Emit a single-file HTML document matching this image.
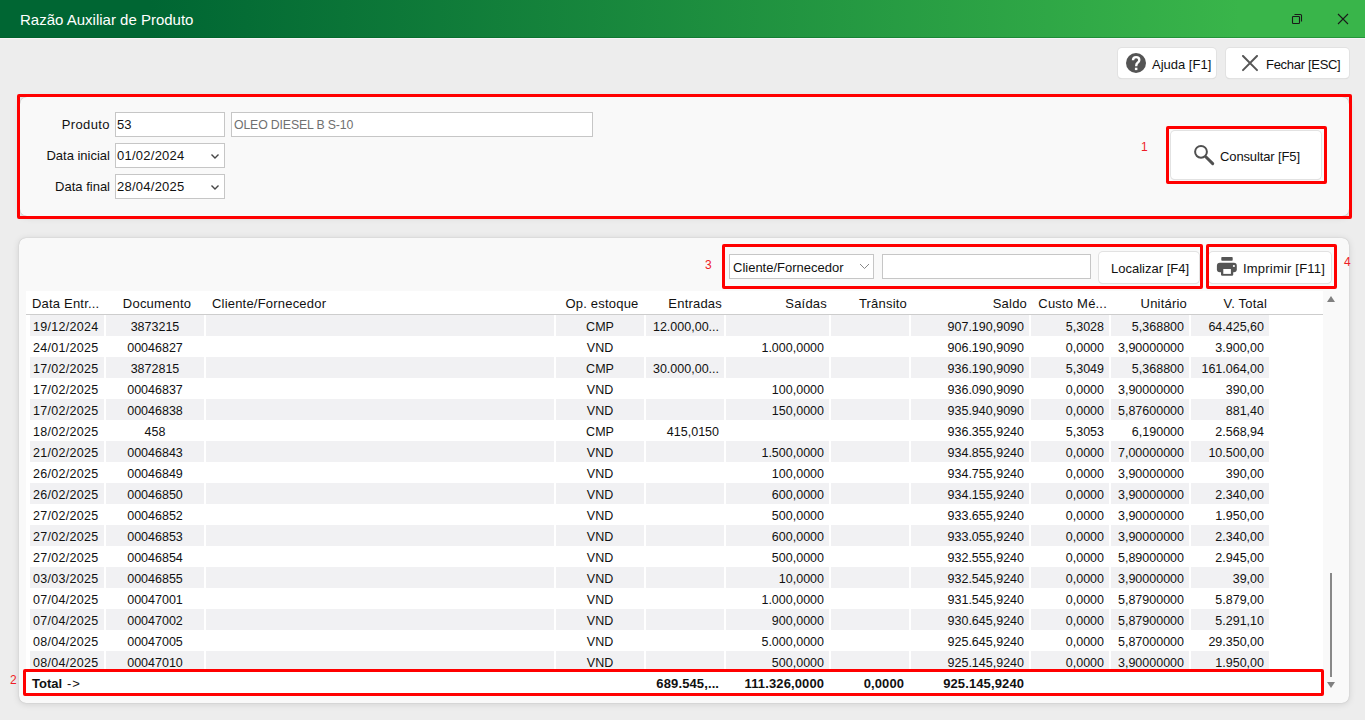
<!DOCTYPE html>
<html><head><meta charset="utf-8">
<style>
*{box-sizing:border-box;margin:0;padding:0}
html,body{width:1365px;height:720px;overflow:hidden;background:#ededed;font-family:"Liberation Sans",sans-serif;font-size:13px;color:#111}
.a{position:absolute}
#title{left:0;top:0;width:1365px;height:38px;background:linear-gradient(to right,#006633 0px,#006633 150px,#39b54a 1240px,#39b54a 1365px);border-bottom:1px solid rgba(0,90,30,0.35)}
#tline{left:0;top:38px;width:1365px;height:1px;background:#f8f4f8}
#ttext{left:20px;top:11px;font-size:15px;color:#fff;line-height:18px;white-space:nowrap}
.btn{position:absolute;background:#fff;border-radius:4px;box-shadow:0 0 0 1px #e2e2e2,0 1px 1px rgba(0,0,0,0.12);white-space:nowrap}
.panel{position:absolute;background:#f9f9f9;border-radius:7px;box-shadow:0 0 1px rgba(0,0,0,0.25),0 1px 7px rgba(0,0,0,0.13)}
.red{position:absolute;border:3px solid #ff0000;border-radius:2px}
.lbl{position:absolute;white-space:nowrap;line-height:16px}
.inp{position:absolute;background:#fff;border:1px solid #c6c6c6}
.num{position:absolute;color:#ee1d26;font-size:12px;line-height:12px}
.tx{position:absolute;white-space:nowrap;line-height:16px}
.th{position:absolute;top:296px;white-space:nowrap;line-height:16px;letter-spacing:0.2px}
.cb{position:absolute;height:21px;background:#f1f1f3}
.td{position:absolute;white-space:nowrap;line-height:21px;height:21px;font-size:12.5px}
.dt{letter-spacing:0.3px}
.b{font-weight:bold;font-size:13px;letter-spacing:0.12px}
</style></head><body>
<div id="title" class="a"></div>
<div id="tline" class="a"></div>
<div id="ttext" class="a">Razão Auxiliar de Produto</div>
<!-- restore icon -->
<svg class="a" style="left:1290px;top:12px" width="14" height="14" viewBox="0 0 14 14"><rect x="2.5" y="4.5" width="7" height="7" rx="0.8" fill="none" stroke="#1a1a1a" stroke-width="1.1"/><path d="M4.5 2.5 H10.5 Q11.5 2.5 11.5 3.5 V9.5" fill="none" stroke="#1a1a1a" stroke-width="1.1"/></svg>
<!-- close icon -->
<svg class="a" style="left:1336px;top:12px" width="14" height="14" viewBox="0 0 14 14"><path d="M2 2 L12 12 M12 2 L2 12" stroke="#1a1a1a" stroke-width="1.1"/></svg>

<!-- top buttons -->
<div class="btn" style="left:1118px;top:48px;width:98px;height:30px"></div>
<svg class="a" style="left:1126px;top:53px" width="20" height="20" viewBox="0 0 20 20"><circle cx="10" cy="10" r="10" fill="#545454"/><path d="M7 7.3 Q7 4.1 10.1 4.1 Q13.3 4.1 13.3 7 Q13.3 8.7 11.6 9.8 Q10.2 10.8 10.2 13.2" fill="none" stroke="#fff" stroke-width="2.4"/><rect x="8.9" y="14.7" width="2.5" height="2.4" fill="#fff"/></svg>
<div class="tx" style="left:1152px;top:57px">Ajuda [F1]</div>
<div class="btn" style="left:1226px;top:48px;width:123px;height:30px"></div>
<svg class="a" style="left:1241px;top:55px" width="18" height="17" viewBox="0 0 18 17"><path d="M2 1 L16 15.1 M16 1 L2 15.1" stroke="#565656" stroke-width="2" stroke-linecap="round"/></svg>
<div class="tx" style="left:1266px;top:57px;letter-spacing:-0.3px">Fechar [ESC]</div>

<!-- panel 1 -->
<div class="panel" style="left:20px;top:97px;width:1329px;height:119px"></div>
<div class="red" style="left:17px;top:94px;width:1335px;height:125px"></div>

<div class="lbl" style="left:0;width:110px;text-align:right;top:117px;letter-spacing:0.4px">Produto</div>
<div class="lbl" style="left:0;width:110px;text-align:right;top:148px">Data inicial</div>
<div class="lbl" style="left:0;width:110px;text-align:right;top:179px">Data final</div>
<div class="inp" style="left:115px;top:112px;width:110px;height:25px"></div>
<div class="tx" style="left:117px;top:117px">53</div>
<div class="inp" style="left:231px;top:112px;width:362px;height:25px"></div>
<div class="tx" style="left:234px;top:117px;color:#707070;font-size:12.3px;letter-spacing:-0.15px">OLEO DIESEL B S-10</div>
<div class="inp" style="left:115px;top:143px;width:110px;height:25px"></div>
<div class="tx" style="left:117px;top:148px;letter-spacing:0.25px">01/02/2024</div>
<svg class="a" style="left:210px;top:152.6px" width="10" height="7" viewBox="0 0 10 7"><path d="M1.5 1.5 L5 5 L8.5 1.5" fill="none" stroke="#464646" stroke-width="1.4"/></svg>
<div class="inp" style="left:115px;top:174px;width:110px;height:25px"></div>
<div class="tx" style="left:117px;top:179px;letter-spacing:0.25px">28/04/2025</div>
<svg class="a" style="left:210px;top:183.6px" width="10" height="7" viewBox="0 0 10 7"><path d="M1.5 1.5 L5 5 L8.5 1.5" fill="none" stroke="#464646" stroke-width="1.4"/></svg>

<div class="num" style="left:1141px;top:141px">1</div>
<div class="btn" style="left:1171px;top:131px;width:150px;height:48px"></div>
<div class="red" style="left:1166px;top:126px;width:161px;height:58px"></div>
<svg class="a" style="left:1192px;top:143px" width="24" height="24" viewBox="0 0 24 24"><circle cx="9" cy="8.8" r="5.9" fill="none" stroke="#505050" stroke-width="2"/><path d="M14 14 L20.7 20.6" stroke="#505050" stroke-width="3" stroke-linecap="round"/></svg>
<div class="tx" style="left:1220px;top:149px;letter-spacing:-0.12px">Consultar [F5]</div>

<!-- panel 2 -->
<div class="panel" style="left:19px;top:238px;width:1330px;height:465px"></div>
<div class="num" style="left:705px;top:259px">3</div>
<div class="inp" style="left:729px;top:254px;width:145px;height:25px"></div>
<div class="tx" style="left:733px;top:260px">Cliente/Fornecedor</div>
<svg class="a" style="left:859px;top:263px" width="11" height="7" viewBox="0 0 11 7"><path d="M1 1 L5.5 5.5 L10 1" fill="none" stroke="#888" stroke-width="1"/></svg>
<div class="inp" style="left:882px;top:254px;width:209px;height:25px"></div>
<div class="btn" style="left:1099px;top:252px;width:100px;height:31px"></div>
<div class="tx" style="left:1111px;top:261px">Localizar [F4]</div>
<div class="red" style="left:722px;top:244px;width:481px;height:45px"></div>
<div class="btn" style="left:1209px;top:252px;width:122px;height:31px"></div>
<div class="red" style="left:1206px;top:244px;width:131px;height:45px"></div>
<div class="num" style="left:1344px;top:256px">4</div>

<!--TABLE-->
<div class="a" style="left:26px;top:291px;width:1297px;height:403px;background:#fff"></div>
<div class="a" style="left:26px;top:314px;width:1297px;height:1px;background:#cdcdcd"></div>
<div class="th" style="left:32px">Data Entr...</div>
<div class="th" style="left:108px;width:98px;text-align:center">Documento</div>
<div class="th" style="left:212px">Cliente/Fornecedor</div>
<div class="th" style="left:558px;width:88px;text-align:center">Op. estoque</div>
<div class="th" style="left:646px;width:76px;text-align:right">Entradas</div>
<div class="th" style="left:726px;width:101px;text-align:right">Saídas</div>
<div class="th" style="left:831px;width:76px;text-align:right">Trânsito</div>
<div class="th" style="left:911px;width:116px;text-align:right">Saldo</div>
<div class="th" style="left:1031px;width:76px;text-align:right">Custo Mé...</div>
<div class="th" style="left:1111px;width:76px;text-align:right">Unitário</div>
<div class="th" style="left:1191px;width:76px;text-align:right">V. Total</div>
<div class="cb" style="left:30px;top:315px;width:74px"></div>
<div class="cb" style="left:106px;top:315px;width:98px"></div>
<div class="cb" style="left:206px;top:315px;width:348px"></div>
<div class="cb" style="left:556px;top:315px;width:88px"></div>
<div class="cb" style="left:646px;top:315px;width:78px"></div>
<div class="cb" style="left:726px;top:315px;width:103px"></div>
<div class="cb" style="left:831px;top:315px;width:78px"></div>
<div class="cb" style="left:911px;top:315px;width:118px"></div>
<div class="cb" style="left:1031px;top:315px;width:78px"></div>
<div class="cb" style="left:1111px;top:315px;width:78px"></div>
<div class="cb" style="left:1191px;top:315px;width:78px"></div>
<div class="td dt" style="top:317px;left:33px">19/12/2024</div>
<div class="td" style="top:317px;left:106px;width:98px;text-align:center">3873215</div>
<div class="td" style="top:317px;left:556px;width:88px;text-align:center">CMP</div>
<div class="td" style="top:317px;left:646px;width:73px;text-align:right">12.000,00...</div>
<div class="td" style="top:317px;left:911px;width:113px;text-align:right">907.190,9090</div>
<div class="td" style="top:317px;left:1031px;width:73px;text-align:right">5,3028</div>
<div class="td" style="top:317px;left:1111px;width:73px;text-align:right">5,368800</div>
<div class="td" style="top:317px;left:1191px;width:73px;text-align:right">64.425,60</div>
<div class="td dt" style="top:338px;left:33px">24/01/2025</div>
<div class="td" style="top:338px;left:106px;width:98px;text-align:center">00046827</div>
<div class="td" style="top:338px;left:556px;width:88px;text-align:center">VND</div>
<div class="td" style="top:338px;left:726px;width:98px;text-align:right">1.000,0000</div>
<div class="td" style="top:338px;left:911px;width:113px;text-align:right">906.190,9090</div>
<div class="td" style="top:338px;left:1031px;width:73px;text-align:right">0,0000</div>
<div class="td" style="top:338px;left:1111px;width:73px;text-align:right">3,90000000</div>
<div class="td" style="top:338px;left:1191px;width:73px;text-align:right">3.900,00</div>
<div class="cb" style="left:30px;top:357px;width:74px"></div>
<div class="cb" style="left:106px;top:357px;width:98px"></div>
<div class="cb" style="left:206px;top:357px;width:348px"></div>
<div class="cb" style="left:556px;top:357px;width:88px"></div>
<div class="cb" style="left:646px;top:357px;width:78px"></div>
<div class="cb" style="left:726px;top:357px;width:103px"></div>
<div class="cb" style="left:831px;top:357px;width:78px"></div>
<div class="cb" style="left:911px;top:357px;width:118px"></div>
<div class="cb" style="left:1031px;top:357px;width:78px"></div>
<div class="cb" style="left:1111px;top:357px;width:78px"></div>
<div class="cb" style="left:1191px;top:357px;width:78px"></div>
<div class="td dt" style="top:359px;left:33px">17/02/2025</div>
<div class="td" style="top:359px;left:106px;width:98px;text-align:center">3872815</div>
<div class="td" style="top:359px;left:556px;width:88px;text-align:center">CMP</div>
<div class="td" style="top:359px;left:646px;width:73px;text-align:right">30.000,00...</div>
<div class="td" style="top:359px;left:911px;width:113px;text-align:right">936.190,9090</div>
<div class="td" style="top:359px;left:1031px;width:73px;text-align:right">5,3049</div>
<div class="td" style="top:359px;left:1111px;width:73px;text-align:right">5,368800</div>
<div class="td" style="top:359px;left:1191px;width:73px;text-align:right">161.064,00</div>
<div class="td dt" style="top:380px;left:33px">17/02/2025</div>
<div class="td" style="top:380px;left:106px;width:98px;text-align:center">00046837</div>
<div class="td" style="top:380px;left:556px;width:88px;text-align:center">VND</div>
<div class="td" style="top:380px;left:726px;width:98px;text-align:right">100,0000</div>
<div class="td" style="top:380px;left:911px;width:113px;text-align:right">936.090,9090</div>
<div class="td" style="top:380px;left:1031px;width:73px;text-align:right">0,0000</div>
<div class="td" style="top:380px;left:1111px;width:73px;text-align:right">3,90000000</div>
<div class="td" style="top:380px;left:1191px;width:73px;text-align:right">390,00</div>
<div class="cb" style="left:30px;top:399px;width:74px"></div>
<div class="cb" style="left:106px;top:399px;width:98px"></div>
<div class="cb" style="left:206px;top:399px;width:348px"></div>
<div class="cb" style="left:556px;top:399px;width:88px"></div>
<div class="cb" style="left:646px;top:399px;width:78px"></div>
<div class="cb" style="left:726px;top:399px;width:103px"></div>
<div class="cb" style="left:831px;top:399px;width:78px"></div>
<div class="cb" style="left:911px;top:399px;width:118px"></div>
<div class="cb" style="left:1031px;top:399px;width:78px"></div>
<div class="cb" style="left:1111px;top:399px;width:78px"></div>
<div class="cb" style="left:1191px;top:399px;width:78px"></div>
<div class="td dt" style="top:401px;left:33px">17/02/2025</div>
<div class="td" style="top:401px;left:106px;width:98px;text-align:center">00046838</div>
<div class="td" style="top:401px;left:556px;width:88px;text-align:center">VND</div>
<div class="td" style="top:401px;left:726px;width:98px;text-align:right">150,0000</div>
<div class="td" style="top:401px;left:911px;width:113px;text-align:right">935.940,9090</div>
<div class="td" style="top:401px;left:1031px;width:73px;text-align:right">0,0000</div>
<div class="td" style="top:401px;left:1111px;width:73px;text-align:right">5,87600000</div>
<div class="td" style="top:401px;left:1191px;width:73px;text-align:right">881,40</div>
<div class="td dt" style="top:422px;left:33px">18/02/2025</div>
<div class="td" style="top:422px;left:106px;width:98px;text-align:center">458</div>
<div class="td" style="top:422px;left:556px;width:88px;text-align:center">CMP</div>
<div class="td" style="top:422px;left:646px;width:73px;text-align:right">415,0150</div>
<div class="td" style="top:422px;left:911px;width:113px;text-align:right">936.355,9240</div>
<div class="td" style="top:422px;left:1031px;width:73px;text-align:right">5,3053</div>
<div class="td" style="top:422px;left:1111px;width:73px;text-align:right">6,190000</div>
<div class="td" style="top:422px;left:1191px;width:73px;text-align:right">2.568,94</div>
<div class="cb" style="left:30px;top:441px;width:74px"></div>
<div class="cb" style="left:106px;top:441px;width:98px"></div>
<div class="cb" style="left:206px;top:441px;width:348px"></div>
<div class="cb" style="left:556px;top:441px;width:88px"></div>
<div class="cb" style="left:646px;top:441px;width:78px"></div>
<div class="cb" style="left:726px;top:441px;width:103px"></div>
<div class="cb" style="left:831px;top:441px;width:78px"></div>
<div class="cb" style="left:911px;top:441px;width:118px"></div>
<div class="cb" style="left:1031px;top:441px;width:78px"></div>
<div class="cb" style="left:1111px;top:441px;width:78px"></div>
<div class="cb" style="left:1191px;top:441px;width:78px"></div>
<div class="td dt" style="top:443px;left:33px">21/02/2025</div>
<div class="td" style="top:443px;left:106px;width:98px;text-align:center">00046843</div>
<div class="td" style="top:443px;left:556px;width:88px;text-align:center">VND</div>
<div class="td" style="top:443px;left:726px;width:98px;text-align:right">1.500,0000</div>
<div class="td" style="top:443px;left:911px;width:113px;text-align:right">934.855,9240</div>
<div class="td" style="top:443px;left:1031px;width:73px;text-align:right">0,0000</div>
<div class="td" style="top:443px;left:1111px;width:73px;text-align:right">7,00000000</div>
<div class="td" style="top:443px;left:1191px;width:73px;text-align:right">10.500,00</div>
<div class="td dt" style="top:464px;left:33px">26/02/2025</div>
<div class="td" style="top:464px;left:106px;width:98px;text-align:center">00046849</div>
<div class="td" style="top:464px;left:556px;width:88px;text-align:center">VND</div>
<div class="td" style="top:464px;left:726px;width:98px;text-align:right">100,0000</div>
<div class="td" style="top:464px;left:911px;width:113px;text-align:right">934.755,9240</div>
<div class="td" style="top:464px;left:1031px;width:73px;text-align:right">0,0000</div>
<div class="td" style="top:464px;left:1111px;width:73px;text-align:right">3,90000000</div>
<div class="td" style="top:464px;left:1191px;width:73px;text-align:right">390,00</div>
<div class="cb" style="left:30px;top:483px;width:74px"></div>
<div class="cb" style="left:106px;top:483px;width:98px"></div>
<div class="cb" style="left:206px;top:483px;width:348px"></div>
<div class="cb" style="left:556px;top:483px;width:88px"></div>
<div class="cb" style="left:646px;top:483px;width:78px"></div>
<div class="cb" style="left:726px;top:483px;width:103px"></div>
<div class="cb" style="left:831px;top:483px;width:78px"></div>
<div class="cb" style="left:911px;top:483px;width:118px"></div>
<div class="cb" style="left:1031px;top:483px;width:78px"></div>
<div class="cb" style="left:1111px;top:483px;width:78px"></div>
<div class="cb" style="left:1191px;top:483px;width:78px"></div>
<div class="td dt" style="top:485px;left:33px">26/02/2025</div>
<div class="td" style="top:485px;left:106px;width:98px;text-align:center">00046850</div>
<div class="td" style="top:485px;left:556px;width:88px;text-align:center">VND</div>
<div class="td" style="top:485px;left:726px;width:98px;text-align:right">600,0000</div>
<div class="td" style="top:485px;left:911px;width:113px;text-align:right">934.155,9240</div>
<div class="td" style="top:485px;left:1031px;width:73px;text-align:right">0,0000</div>
<div class="td" style="top:485px;left:1111px;width:73px;text-align:right">3,90000000</div>
<div class="td" style="top:485px;left:1191px;width:73px;text-align:right">2.340,00</div>
<div class="td dt" style="top:506px;left:33px">27/02/2025</div>
<div class="td" style="top:506px;left:106px;width:98px;text-align:center">00046852</div>
<div class="td" style="top:506px;left:556px;width:88px;text-align:center">VND</div>
<div class="td" style="top:506px;left:726px;width:98px;text-align:right">500,0000</div>
<div class="td" style="top:506px;left:911px;width:113px;text-align:right">933.655,9240</div>
<div class="td" style="top:506px;left:1031px;width:73px;text-align:right">0,0000</div>
<div class="td" style="top:506px;left:1111px;width:73px;text-align:right">3,90000000</div>
<div class="td" style="top:506px;left:1191px;width:73px;text-align:right">1.950,00</div>
<div class="cb" style="left:30px;top:525px;width:74px"></div>
<div class="cb" style="left:106px;top:525px;width:98px"></div>
<div class="cb" style="left:206px;top:525px;width:348px"></div>
<div class="cb" style="left:556px;top:525px;width:88px"></div>
<div class="cb" style="left:646px;top:525px;width:78px"></div>
<div class="cb" style="left:726px;top:525px;width:103px"></div>
<div class="cb" style="left:831px;top:525px;width:78px"></div>
<div class="cb" style="left:911px;top:525px;width:118px"></div>
<div class="cb" style="left:1031px;top:525px;width:78px"></div>
<div class="cb" style="left:1111px;top:525px;width:78px"></div>
<div class="cb" style="left:1191px;top:525px;width:78px"></div>
<div class="td dt" style="top:527px;left:33px">27/02/2025</div>
<div class="td" style="top:527px;left:106px;width:98px;text-align:center">00046853</div>
<div class="td" style="top:527px;left:556px;width:88px;text-align:center">VND</div>
<div class="td" style="top:527px;left:726px;width:98px;text-align:right">600,0000</div>
<div class="td" style="top:527px;left:911px;width:113px;text-align:right">933.055,9240</div>
<div class="td" style="top:527px;left:1031px;width:73px;text-align:right">0,0000</div>
<div class="td" style="top:527px;left:1111px;width:73px;text-align:right">3,90000000</div>
<div class="td" style="top:527px;left:1191px;width:73px;text-align:right">2.340,00</div>
<div class="td dt" style="top:548px;left:33px">27/02/2025</div>
<div class="td" style="top:548px;left:106px;width:98px;text-align:center">00046854</div>
<div class="td" style="top:548px;left:556px;width:88px;text-align:center">VND</div>
<div class="td" style="top:548px;left:726px;width:98px;text-align:right">500,0000</div>
<div class="td" style="top:548px;left:911px;width:113px;text-align:right">932.555,9240</div>
<div class="td" style="top:548px;left:1031px;width:73px;text-align:right">0,0000</div>
<div class="td" style="top:548px;left:1111px;width:73px;text-align:right">5,89000000</div>
<div class="td" style="top:548px;left:1191px;width:73px;text-align:right">2.945,00</div>
<div class="cb" style="left:30px;top:567px;width:74px"></div>
<div class="cb" style="left:106px;top:567px;width:98px"></div>
<div class="cb" style="left:206px;top:567px;width:348px"></div>
<div class="cb" style="left:556px;top:567px;width:88px"></div>
<div class="cb" style="left:646px;top:567px;width:78px"></div>
<div class="cb" style="left:726px;top:567px;width:103px"></div>
<div class="cb" style="left:831px;top:567px;width:78px"></div>
<div class="cb" style="left:911px;top:567px;width:118px"></div>
<div class="cb" style="left:1031px;top:567px;width:78px"></div>
<div class="cb" style="left:1111px;top:567px;width:78px"></div>
<div class="cb" style="left:1191px;top:567px;width:78px"></div>
<div class="td dt" style="top:569px;left:33px">03/03/2025</div>
<div class="td" style="top:569px;left:106px;width:98px;text-align:center">00046855</div>
<div class="td" style="top:569px;left:556px;width:88px;text-align:center">VND</div>
<div class="td" style="top:569px;left:726px;width:98px;text-align:right">10,0000</div>
<div class="td" style="top:569px;left:911px;width:113px;text-align:right">932.545,9240</div>
<div class="td" style="top:569px;left:1031px;width:73px;text-align:right">0,0000</div>
<div class="td" style="top:569px;left:1111px;width:73px;text-align:right">3,90000000</div>
<div class="td" style="top:569px;left:1191px;width:73px;text-align:right">39,00</div>
<div class="td dt" style="top:590px;left:33px">07/04/2025</div>
<div class="td" style="top:590px;left:106px;width:98px;text-align:center">00047001</div>
<div class="td" style="top:590px;left:556px;width:88px;text-align:center">VND</div>
<div class="td" style="top:590px;left:726px;width:98px;text-align:right">1.000,0000</div>
<div class="td" style="top:590px;left:911px;width:113px;text-align:right">931.545,9240</div>
<div class="td" style="top:590px;left:1031px;width:73px;text-align:right">0,0000</div>
<div class="td" style="top:590px;left:1111px;width:73px;text-align:right">5,87900000</div>
<div class="td" style="top:590px;left:1191px;width:73px;text-align:right">5.879,00</div>
<div class="cb" style="left:30px;top:609px;width:74px"></div>
<div class="cb" style="left:106px;top:609px;width:98px"></div>
<div class="cb" style="left:206px;top:609px;width:348px"></div>
<div class="cb" style="left:556px;top:609px;width:88px"></div>
<div class="cb" style="left:646px;top:609px;width:78px"></div>
<div class="cb" style="left:726px;top:609px;width:103px"></div>
<div class="cb" style="left:831px;top:609px;width:78px"></div>
<div class="cb" style="left:911px;top:609px;width:118px"></div>
<div class="cb" style="left:1031px;top:609px;width:78px"></div>
<div class="cb" style="left:1111px;top:609px;width:78px"></div>
<div class="cb" style="left:1191px;top:609px;width:78px"></div>
<div class="td dt" style="top:611px;left:33px">07/04/2025</div>
<div class="td" style="top:611px;left:106px;width:98px;text-align:center">00047002</div>
<div class="td" style="top:611px;left:556px;width:88px;text-align:center">VND</div>
<div class="td" style="top:611px;left:726px;width:98px;text-align:right">900,0000</div>
<div class="td" style="top:611px;left:911px;width:113px;text-align:right">930.645,9240</div>
<div class="td" style="top:611px;left:1031px;width:73px;text-align:right">0,0000</div>
<div class="td" style="top:611px;left:1111px;width:73px;text-align:right">5,87900000</div>
<div class="td" style="top:611px;left:1191px;width:73px;text-align:right">5.291,10</div>
<div class="td dt" style="top:632px;left:33px">08/04/2025</div>
<div class="td" style="top:632px;left:106px;width:98px;text-align:center">00047005</div>
<div class="td" style="top:632px;left:556px;width:88px;text-align:center">VND</div>
<div class="td" style="top:632px;left:726px;width:98px;text-align:right">5.000,0000</div>
<div class="td" style="top:632px;left:911px;width:113px;text-align:right">925.645,9240</div>
<div class="td" style="top:632px;left:1031px;width:73px;text-align:right">0,0000</div>
<div class="td" style="top:632px;left:1111px;width:73px;text-align:right">5,87000000</div>
<div class="td" style="top:632px;left:1191px;width:73px;text-align:right">29.350,00</div>
<div class="cb" style="left:30px;top:651px;width:74px"></div>
<div class="cb" style="left:106px;top:651px;width:98px"></div>
<div class="cb" style="left:206px;top:651px;width:348px"></div>
<div class="cb" style="left:556px;top:651px;width:88px"></div>
<div class="cb" style="left:646px;top:651px;width:78px"></div>
<div class="cb" style="left:726px;top:651px;width:103px"></div>
<div class="cb" style="left:831px;top:651px;width:78px"></div>
<div class="cb" style="left:911px;top:651px;width:118px"></div>
<div class="cb" style="left:1031px;top:651px;width:78px"></div>
<div class="cb" style="left:1111px;top:651px;width:78px"></div>
<div class="cb" style="left:1191px;top:651px;width:78px"></div>
<div class="td dt" style="top:653px;left:33px">08/04/2025</div>
<div class="td" style="top:653px;left:106px;width:98px;text-align:center">00047010</div>
<div class="td" style="top:653px;left:556px;width:88px;text-align:center">VND</div>
<div class="td" style="top:653px;left:726px;width:98px;text-align:right">500,0000</div>
<div class="td" style="top:653px;left:911px;width:113px;text-align:right">925.145,9240</div>
<div class="td" style="top:653px;left:1031px;width:73px;text-align:right">0,0000</div>
<div class="td" style="top:653px;left:1111px;width:73px;text-align:right">3,90000000</div>
<div class="td" style="top:653px;left:1191px;width:73px;text-align:right">1.950,00</div>
<div class="a" style="left:26px;top:672px;width:1297px;height:22px;background:#fff"></div>
<div class="td b" style="top:672.5px;left:32px;letter-spacing:0">Total</div>
<div class="td" style="top:673px;left:67px;font-size:13px;letter-spacing:1px">-&gt;</div>
<div class="td b" style="top:672.5px;left:646px;width:73.12px;text-align:right">689.545,...</div>
<div class="td b" style="top:672.5px;left:726px;width:98.12px;text-align:right">111.326,0000</div>
<div class="td b" style="top:672.5px;left:831px;width:73.12px;text-align:right">0,0000</div>
<div class="td b" style="top:672.5px;left:911px;width:113.12px;text-align:right">925.145,9240</div>
<!--/TABLE-->
<!-- imprimir -->
<svg class="a" style="left:1216px;top:256px" width="22" height="21" viewBox="0 0 22 21"><rect x="5.3" y="1" width="11.4" height="3.7" rx="0.8" fill="#555"/><rect x="0.9" y="6.8" width="19.9" height="9.4" rx="3" fill="#555"/><rect x="5" y="12" width="12.2" height="7.7" rx="1.2" fill="#555"/><rect x="7.3" y="13" width="7.6" height="4.9" fill="#fff"/><circle cx="17.9" cy="10" r="1.1" fill="#fff"/></svg>
<div class="tx" style="left:1243px;top:261px;letter-spacing:0.2px">Imprimir [F11]</div>
<!-- scrollbar -->
<svg class="a" style="left:1326px;top:295px" width="10" height="8" viewBox="0 0 10 8"><path d="M1 7 L5 1 L9 7 Z" fill="#808080"/></svg>
<div class="a" style="left:1330px;top:573px;width:2px;height:104px;background:#888"></div>
<svg class="a" style="left:1326px;top:681px" width="10" height="8" viewBox="0 0 10 8"><path d="M1 1 L5 7 L9 1 Z" fill="#808080"/></svg>
<div class="red" style="left:23px;top:669px;width:1301px;height:27px"></div>
<div class="num" style="left:10px;top:674px">2</div>
</body></html>
